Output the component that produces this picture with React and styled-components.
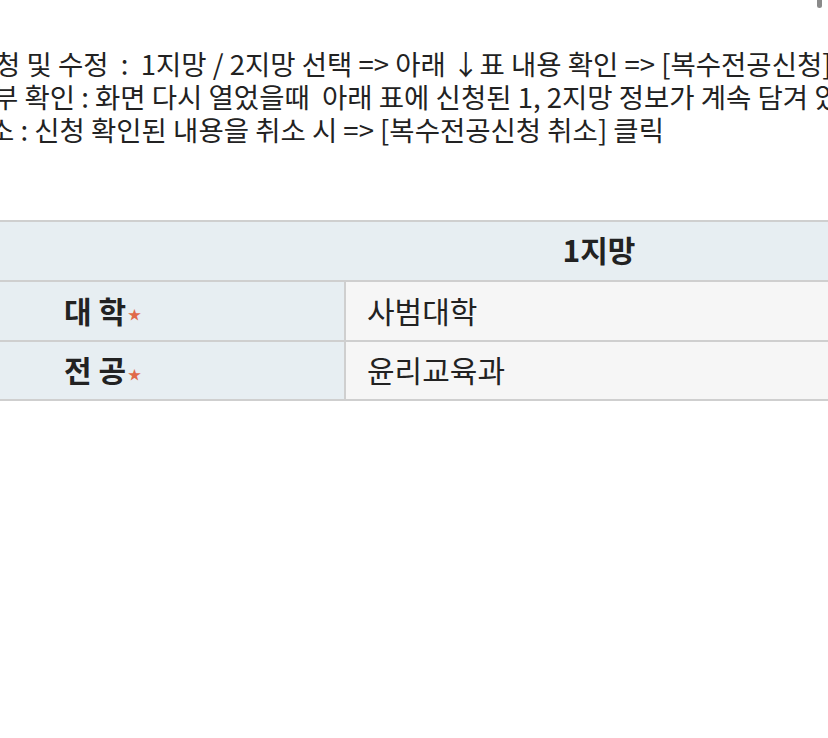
import React from 'react'
import styled, { createGlobalStyle } from 'styled-components'

const GlobalStyle = createGlobalStyle`
  html, body {
    margin: 0;
    padding: 0;
    background: #ffffff;
    overflow: hidden;
  }
  body {
    font-family: "Noto Sans CJK KR", "Noto Sans", sans-serif;
    color: #222222;
  }
`

const Page = styled.div`
  position: relative;
  width: 828px;
  height: 738px;
  overflow: hidden;
  padding-top: 47px;
  box-sizing: border-box;
`

const ScrollThumb = styled.div`
  position: absolute;
  top: 0;
  right: 6px;
  width: 5px;
  height: 8px;
  background: #8a8a8a;
  border-radius: 0 0 3px 3px;
`

const Guide = styled.div`
  font-size: 27.5px;
  line-height: 33px;
  white-space: nowrap;
`

const Line = styled.div`
  margin-left: ${p => p.shift}px;
`

const Table = styled.div`
  display: grid;
  grid-template-columns: 366px 1fr;
  width: 872px;
  margin: 74px 0 0 -20px;
  border-top: 2px solid #cfcfcf;
  border-bottom: 2px solid #cfcfcf;
`

const HeadCell = styled.div`
  height: 60px;
  box-sizing: border-box;
  background: #e7eef2;
  border-bottom: 2px solid #cfcfcf;
  display: flex;
  align-items: center;
  justify-content: center;
  padding-bottom: 4px;
  font-size: 30px;
  font-weight: 700;
`

const LabelCell = styled.div`
  height: ${p => (p.last ? 57 : 60)}px;
  box-sizing: border-box;
  background: #e7eef2;
  border-right: 2px solid #cfcfcf;
  border-bottom: ${p => (p.last ? 'none' : '2px solid #cfcfcf')};
  display: flex;
  align-items: center;
  padding: 0 0 3px 84px;
  font-size: 30px;
  font-weight: 700;
`

const Star = styled.span`
  color: #e0694a;
  font-size: 13px;
  margin-left: 2px;
  margin-top: 8px;
`

const ValueCell = styled.div`
  height: ${p => (p.last ? 57 : 60)}px;
  box-sizing: border-box;
  background: #f6f6f6;
  border-bottom: ${p => (p.last ? 'none' : '2px solid #cfcfcf')};
  display: flex;
  align-items: center;
  padding: 0 0 3px 21px;
  font-size: 30px;
`

const rows = [
  { label: '대 학', value: '사범대학' },
  { label: '전 공', value: '윤리교육과' },
]

const App = () => {
  return (
    <>
      <GlobalStyle />
      <Page>
        <ScrollThumb />
        <Guide>
          <Line shift={-5}>청 및 수정 &nbsp;: &nbsp;1지망 / 2지망 선택 =&gt; 아래 ↓표 내용 확인 =&gt; [복수전공신청] 클릭</Line>
          <Line shift={-7}>부 확인 : 화면 다시 열었을때 &nbsp;아래 표에 신청된 1, 2지망 정보가 계속 담겨 있으면 신청완료</Line>
          <Line shift={-11}>소 : 신청 확인된 내용을 취소 시 =&gt; [복수전공신청 취소] 클릭</Line>
        </Guide>
        <Table>
          <HeadCell />
          <HeadCell>1지망</HeadCell>
          {rows.map((row, i) => (
            <React.Fragment key={i}>
              <LabelCell last={i === rows.length - 1}>
                {row.label}
                <Star>★</Star>
              </LabelCell>
              <ValueCell last={i === rows.length - 1}>{row.value}</ValueCell>
            </React.Fragment>
          ))}
        </Table>
      </Page>
    </>
  )
}

export default App
